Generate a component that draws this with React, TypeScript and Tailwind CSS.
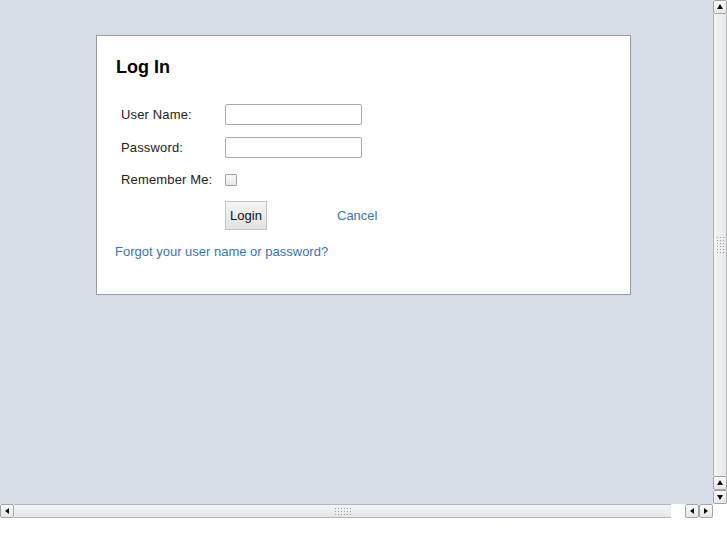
import { ReactNode } from "react"

const ArrowBtn = ({ children, className = "" }: { children: ReactNode; className?: string }) => (
  <div className={"w-[14px] h-[14px] flex items-center justify-center border border-[#a3a3a3] rounded-[2px] bg-gradient-to-b from-[#fbfbfb] to-[#e6e6e6] " + className}>
    {children}
  </div>
)

const Tri = ({ dir }: { dir: "up" | "down" | "left" | "right" }) => {
  const pts = {
    up: "4,1 7,6 1,6",
    down: "1,2 7,2 4,7",
    left: "6,1 6,7 2,4",
    right: "2,1 2,7 6,4",
  }[dir]
  return (
    <svg width="8" height="8" viewBox="0 0 8 8">
      <polygon points={pts} fill="#111" />
    </svg>
  )
}

const Grip = ({ vertical }: { vertical?: boolean }) => (
  <div className={vertical ? "grid grid-cols-3 gap-[2px]" : "grid grid-cols-6 gap-[2px]"}>
    {Array.from({ length: 18 }).map((_, i) => (
      <div key={i} className="w-[1px] h-[1px] bg-[#9a9a9a]" />
    ))}
  </div>
)

const Row = ({ label, children, h = "h-[33px]" }: { label: string; children: ReactNode; h?: string }) => (
  <div className={"flex items-center " + h}>
    <div className="w-[109px] pl-[5px] tracking-[0.15px]">{label}</div>
    {children}
  </div>
)

const App = () => {
  return (
    <div className="w-[727px] h-[545px] bg-white flex flex-col text-[13px] text-[#222]" style={{ fontFamily: '"Liberation Sans", Arial, sans-serif' }}>
      <div className="flex h-[504px]">
        <div className="flex-1 bg-[#d6dde6] pt-[35px] pl-[96px]">
          <div className="w-[535px] h-[260px] bg-white border border-[#9b9b9b] pl-[19px] pt-[20px]">
            <h2 className="text-[18px] leading-[22px] font-bold text-black">Log In</h2>

            <div className="mt-[20px]">
              <Row label="User Name:">
                <input className="w-[137px] h-[21px] border border-[#a8a8a8] rounded-[2px] bg-white outline-none" />
              </Row>
              <Row label="Password:">
                <input type="password" className="w-[137px] h-[21px] border border-[#a8a8a8] rounded-[2px] bg-white outline-none" />
              </Row>
              <Row label="Remember Me:" h="h-[31px]">
                <div className="w-[12px] h-[12px] border border-[#a0a0a0] rounded-[1px] bg-gradient-to-b from-[#fafafa] to-[#e8e8e8]" />
              </Row>
            </div>

            <div className="flex items-center mt-[6px]">
              <div className="w-[109px]" />
              <button className="w-[42px] h-[29px] border border-[#c4c4c4] bg-gradient-to-b from-[#f4f4f4] to-[#e2e2e2] text-[13px] text-[#111]">
                Login
              </button>
              <a className="ml-[70px] text-[#3d74ad]">Cancel</a>
            </div>

            <a className="block mt-[12px] -ml-[1px] text-[#3d74ad]">Forgot your user name or password?</a>
          </div>
        </div>

        <div className="w-[14px] flex flex-col bg-[#eef0f3]">
          <ArrowBtn><Tri dir="up" /></ArrowBtn>
          <div className="flex-1 border-x border-[#b5b5b5] bg-gradient-to-r from-[#f2f3f5] to-[#e6e8eb] flex items-center justify-center">
            <Grip vertical />
          </div>
          <ArrowBtn><Tri dir="up" /></ArrowBtn>
          <ArrowBtn><Tri dir="down" /></ArrowBtn>
        </div>
      </div>

      <div className="flex h-[15px]">
        <div className="flex-1 flex bg-white">
          <ArrowBtn><Tri dir="left" /></ArrowBtn>
          <div className="w-[657px] h-[14px] border-y border-[#b5b5b5] bg-gradient-to-b from-[#f4f5f7] to-[#e4e6e9] flex items-center justify-center">
            <Grip />
          </div>
          <div className="flex-1" />
          <ArrowBtn><Tri dir="left" /></ArrowBtn>
          <ArrowBtn><Tri dir="right" /></ArrowBtn>
        </div>
        <div className="w-[14px]" />
      </div>

      <div className="flex-1 bg-white" />
    </div>
  )
}

export default App
